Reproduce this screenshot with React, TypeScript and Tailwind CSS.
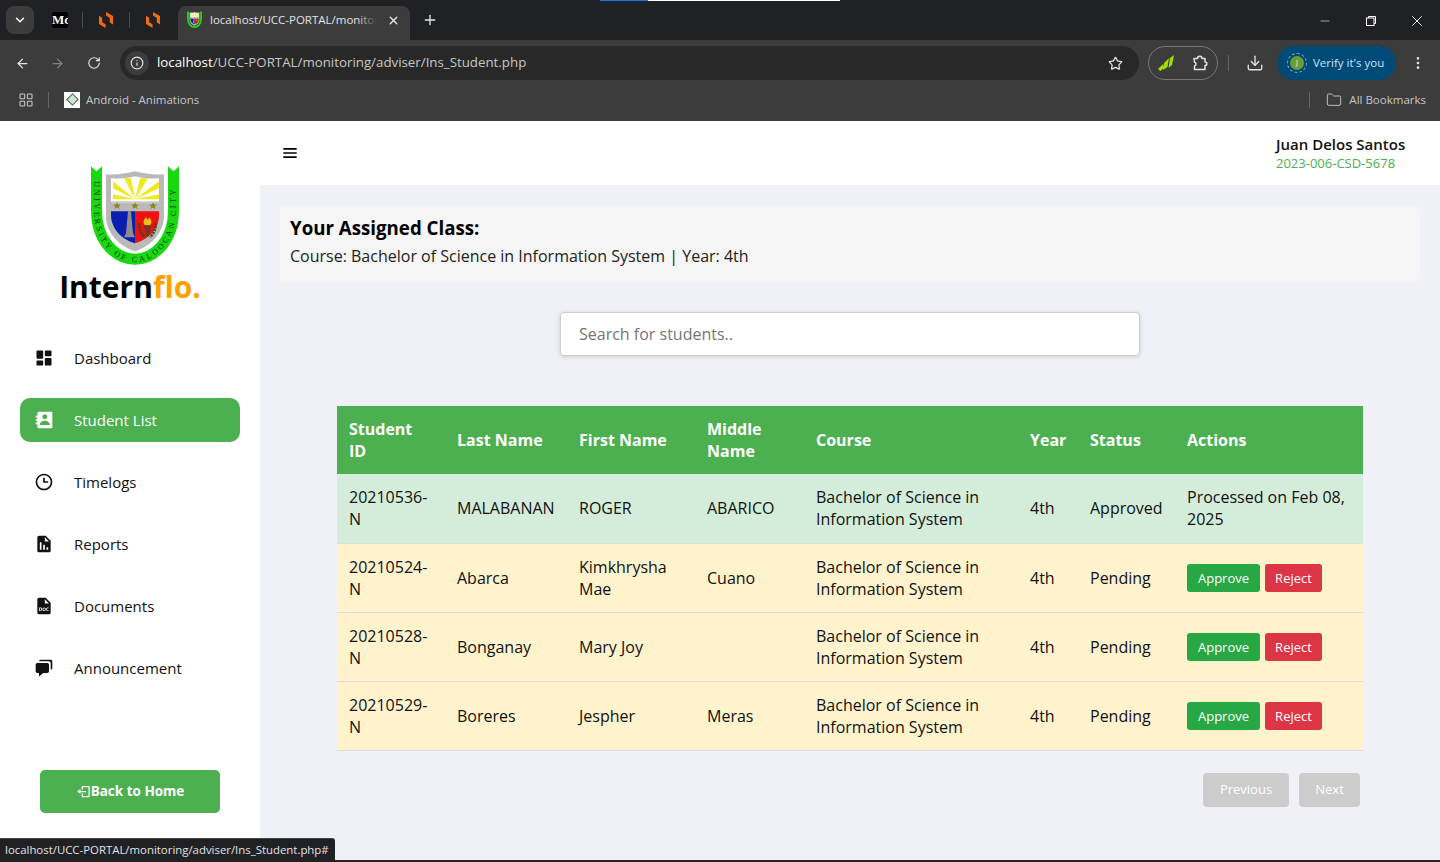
import { ChevronDown, X, Plus, ArrowLeft, ArrowRight, RotateCw, Info, Star, Download, EllipsisVertical, LayoutGrid, Folder, Minus } from "lucide-react"
import { BiSolidDashboard, BiSolidContact, BiTime, BiSolidReport, BiSolidFileDoc, BiSolidChat, BiMenu, BiLogOut } from "react-icons/bi"

const navItems = [
  { label: "Dashboard", icon: BiSolidDashboard },
  { label: "Student List", icon: BiSolidContact, active: true },
  { label: "Timelogs", icon: BiTime },
  { label: "Reports", icon: BiSolidReport },
  { label: "Documents", icon: BiSolidFileDoc },
  { label: "Announcement", icon: BiSolidChat },
]

const students = [
  { id: "20210536-N", last: "MALABANAN", first: "ROGER", middle: "ABARICO", status: "Approved" },
  { id: "20210524-N", last: "Abarca", first: "Kimkhrysha Mae", middle: "Cuano", status: "Pending" },
  { id: "20210528-N", last: "Bonganay", first: "Mary Joy", middle: "", status: "Pending" },
  { id: "20210529-N", last: "Boreres", first: "Jespher", middle: "Meras", status: "Pending" },
]

function Crest({ size, id, label }: { size: number; id: string; label?: boolean }) {
  return (
    <svg width={size} height={size * 1.14} viewBox="0 0 88 100" fontFamily="Liberation Serif, serif">
      <path d="M5.500 8V45C5.500 75 24 94 44 94C64 94 82.500 75 82.500 45V8" fill="none" stroke="#19d80f" strokeWidth="11" />
      <path d="M0 1l5.500 5L11 1v12H0zM77 1l5.500 5L88 1v12H77z" fill="#19d80f" />
      <path d="M15 9c10 1 20-1 29-3 9 2 19 4 29 3v42c0 16-13 30-29 35C28 81 15 67 15 51z" fill="#b9b9b9" />
      <path d="M20 13c8 1 16 0 24-2 8 2 16 3 24 2v24H20z" fill="#fff" />
      <path d="M44 34L33 13h7zM44 34l5-21h8zM44 34L22 16v7zM44 34l24-18v7zM44 34H22v-5zM44 34h24v-5z" fill="#eeea1e" />
      <path d="M20 36h48v2H20z" fill="#c9c9c9" />
      <path d="M26 37l1.200 2.400 2.600.2-2 1.700.7 2.600-2.500-1.500-2.500 1.500.7-2.600-2-1.700 2.600-.2zM44 37l1.200 2.400 2.600.2-2 1.700.7 2.600-2.500-1.500-2.500 1.500.7-2.600-2-1.700 2.600-.2zM62 37l1.200 2.400 2.600.2-2 1.700.7 2.600-2.500-1.500-2.500 1.500.7-2.600-2-1.700 2.600-.2z" fill="#8a8a20" />
      <path d="M20 46h24v32c-12-3-24-14-24-28z" fill="#0a1fb0" />
      <path d="M44 46h24v4c0 14-12 25-24 28z" fill="#ee1111" />
      <path d="M33 72l2-4 2-22h3l2 22 2 4z" fill="#8d8d8d" />
      <path d="M55 52c-3 3-3 6-1 8h5c2-2 2-5-1-8l-1 3z" fill="#f2c21b" />
      <path d="M53 60h7l-2 11h-3z" fill="#6b3a22" />
      <path d="M48 58c0 7 3 11 6 14M65 58c0 7-3 11-6 14" fill="none" stroke="#3a4a20" strokeWidth="2.500" strokeDasharray="2 1" />
      <path id={id} d="M3 14V45C3 77 24 97 44 97C64 97 85 77 85 45V14" fill="none" />
      {label && (
        <text fontSize="8" fill="#0e300e">
          <textPath href={`#${id}`} startOffset="2" textLength="196">UNIVERSITY  OF  CALOOCAN  CITY</textPath>
        </text>
      )}
    </svg>
  )
}

function ChromeTabs() {
  return (
    <div className="flex h-10 items-start bg-[#202124] pl-[6px] pt-[6px]">
      <div className="flex h-[28px] w-[28px] items-center justify-center rounded-lg bg-[#3c3c3c] text-white">
        <ChevronDown size={14} strokeWidth={2.500} />
      </div>
      <div className="ml-[18px] mt-[6px] flex h-4 w-4 items-center overflow-hidden rounded-[2px] bg-black font-['Liberation_Serif',serif] text-[13px] font-bold text-white">Mc</div>
      <div className="ml-[14px] mt-[6px] h-4 w-px bg-[#4a4a4a]" />
      <Bolt className="ml-[15px] mt-[6px]" />
      <div className="ml-[15px] mt-[6px] h-4 w-px bg-[#4a4a4a]" />
      <Bolt className="ml-[15px] mt-[6px]" />
      <div className="ml-[17px] flex h-[34px] w-[232px] items-center rounded-t-lg bg-[#3c3c3c] pb-[6px] pl-[9px] pr-2">
        <Crest size={15} id="tabCrest" />
        <div className="relative ml-[8px] w-[167px] overflow-hidden whitespace-nowrap text-[11.500px] text-[#e3e3e3]">
          localhost/UCC-PORTAL/monitoring
          <div className="absolute inset-y-0 right-0 w-5 bg-gradient-to-r from-transparent to-[#3c3c3c]" />
        </div>
        <X size={13} strokeWidth={2.500} className="ml-[10px] text-[#e3e3e3]" />
      </div>
      <Plus size={16} strokeWidth={2} className="ml-[12px] mt-[6px] text-[#e3e3e3]" />
      <div className="ml-auto flex items-center text-white">
        <Minus size={14} strokeWidth={1} className="mr-[33px] mt-[6px]" />
        <svg width="12" height="12" viewBox="0 0 12 12" fill="none" stroke="currentColor" className="mr-[31px] mt-[6px]">
          <rect x="1.500" y="3" width="7.500" height="7.500" />
          <path d="M3.500 3V1.500h7v7H9" />
        </svg>
        <X size={18} strokeWidth={1.200} className="mr-[14px] mt-[6px]" />
      </div>
    </div>
  )
}

function Bolt({ className }: { className: string }) {
  return (
    <svg width="16" height="16" viewBox="0 0 16 16" className={className} fill="#f26b12">
      <path d="M8 0l7 4v8.500l-3.200-2V6L8 3.600zM7.500 16L1 12V3.700l3.200 2V10.300l3.300 2z" />
    </svg>
  )
}

function ChromeToolbar() {
  return (
    <div className="flex h-[41px] items-center bg-[#3c3c3c] pl-[15px] pt-[5px] text-[#e3e3e3]">
      <ArrowLeft size={15} strokeWidth={2} />
      <ArrowRight size={15} strokeWidth={2} className="ml-[20px] text-[#808080]" />
      <RotateCw size={14} strokeWidth={2} className="ml-[22px]" />
      <div className="ml-[19px] flex h-[34px] w-[1019px] items-center rounded-full bg-[#282828] pl-[5px] pr-[16px]">
        <div className="flex h-[24px] w-[24px] items-center justify-center rounded-full bg-[#3c3c3c]">
          <Info size={14} />
        </div>
        <span className="ml-[8px] text-[13.300px] text-[#c7c7c7]"><span className="text-white">localhost</span>/UCC-PORTAL/monitoring/adviser/Ins_Student.php</span>
        <Star size={15} className="ml-auto" />
      </div>
      <div className="ml-[9px] flex h-[34px] w-[70px] items-center justify-between rounded-full border border-[#777] px-[8px]">
        <svg width="18" height="18" viewBox="0 0 18 18" fill="#9be000">
          <path d="M1 15l5-5 .5 4-3 3zM6 16l1-7 5-5-1.500 9zM11.500 14l1.500-10 4-3-2 10z" />
        </svg>
        <svg width="18" height="18" viewBox="0 0 18 18" fill="none" stroke="currentColor" strokeWidth="1.500" strokeLinejoin="round">
          <path d="M3 4.500h3.500c0-3 4.500-3 4.500 0H14V8c2.500 0 2.500 3.500 0 3.500V15.500H3.500V12c2-.5 2-3.500 0-4z" />
        </svg>
      </div>
      <div className="ml-[10px] h-4 w-px bg-[#666]" />
      <Download size={18} strokeWidth={1.800} className="ml-[17px]" />
      <div className="ml-[13px] flex h-[34px] w-[119px] items-center rounded-full bg-[#004a77] pl-[10px] text-[11.500px] text-[#c2e7ff]">
        <div className="flex h-[20px] w-[20px] items-center justify-center rounded-full border border-dashed border-[#8ab4c8]">
          <div className="flex h-[14px] w-[14px] items-center justify-center rounded-full bg-[#6b9c32] text-[7px] text-white">J</div>
        </div>
        <span className="ml-[6px] whitespace-nowrap">Verify it's you</span>
      </div>
      <EllipsisVertical size={16} className="ml-[14px]" />
    </div>
  )
}

function ChromeBookmarks() {
  return (
    <div className="flex h-10 items-center bg-[#3c3c3c] pb-[3px] pl-[18px] pr-[14px] text-[11.500px] text-[#c7c7c7]">
      <LayoutGrid size={16} strokeWidth={1.600} />
      <div className="ml-[14px] h-4 w-px bg-[#666]" />
      <div className="ml-[15px] flex h-4 w-4 items-center justify-center bg-white">
        <div className="h-[9px] w-[9px] rotate-45 border border-[#446644] bg-[#cfe5cf]" />
      </div>
      <span className="ml-[6px]">Android - Animations</span>
      <div className="ml-auto h-4 w-px bg-[#666]" />
      <Folder size={16} strokeWidth={1.400} className="ml-[16px]" />
      <span className="ml-[7px]">All Bookmarks</span>
    </div>
  )
}

function Sidebar() {
  return (
    <aside className="flex w-[260px] shrink-0 flex-col bg-white">
      <div className="flex flex-col items-center pt-[44px]">
        <div className="ml-[10px]">
          <Crest size={88} id="mainCrest" label />
        </div>
        <div className="mt-[5px] text-[30px] font-bold leading-[34px] text-black">
          Intern<span className="text-[#ff9f00]">flo.</span>
        </div>
      </div>
      <nav className="mt-[32px] flex flex-col gap-[18px] px-5">
        {navItems.map((item) => {
          const Icon = item.icon
          return (
            <a key={item.label} className={`flex h-11 items-center rounded-[10px] pl-[14px] text-[15px] ${item.active ? "bg-[#4caf50] text-white" : "text-[#111]"}`}>
              <Icon size={20} />
              <span className="ml-5">{item.label}</span>
            </a>
          )
        })}
      </nav>
      <div className="mt-auto px-10 pb-[49px]">
        <button className="flex h-[43px] w-full items-center justify-center rounded-[5px] bg-[#4caf50] text-[13.500px] font-bold text-white">
          <BiLogOut size={15} />
          Back to Home
        </button>
      </div>
    </aside>
  )
}

function StudentTable() {
  const th = "px-3 py-3 text-left align-middle text-base font-bold leading-[22px] text-white"
  const td = "px-3 py-3 align-middle leading-[22px]"
  return (
    <table className="ml-[77px] mt-[50px] w-[1026px] table-fixed border-collapse text-base text-[#111]">
      <colgroup>
        <col className="w-[108px]" />
        <col className="w-[122px]" />
        <col className="w-[128px]" />
        <col className="w-[109px]" />
        <col className="w-[214px]" />
        <col className="w-[60px]" />
        <col className="w-[97px]" />
        <col className="w-[188px]" />
      </colgroup>
      <thead className="bg-[#4caf50]">
        <tr>
          <th className={th}>Student ID</th>
          <th className={th}>Last Name</th>
          <th className={th}>First Name</th>
          <th className={th}>Middle Name</th>
          <th className={th}>Course</th>
          <th className={th}>Year</th>
          <th className={th}>Status</th>
          <th className={th}>Actions</th>
        </tr>
      </thead>
      <tbody>
        {students.map((s) => (
          <tr key={s.id} className={`border-b border-[#ddd] ${s.status === "Approved" ? "h-[69px] bg-[#d4edda]" : "bg-[#fff3cd]"}`}>
            <td className={td}>{s.id}</td>
            <td className={td}>{s.last}</td>
            <td className={td}>{s.first}</td>
            <td className={td}>{s.middle}</td>
            <td className={td}>Bachelor of Science in Information System</td>
            <td className={td}>4th</td>
            <td className={td}>{s.status}</td>
            <td className={td}>
              {s.status === "Approved" ? (
                "Processed on Feb 08, 2025"
              ) : (
                <div className="flex gap-[5px]">
                  <button className="h-[28px] w-[73px] rounded-[3px] bg-[#28a745] text-[13px] text-white">Approve</button>
                  <button className="h-[28px] w-[57px] rounded-[3px] bg-[#dc3545] text-[13px] text-white">Reject</button>
                </div>
              )}
            </td>
          </tr>
        ))}
      </tbody>
    </table>
  )
}

export default function App() {
  return (
    <div className="relative flex h-[862px] flex-col overflow-hidden bg-[#f0f0f7] font-['Open_Sans',sans-serif]">
      <div className="absolute left-[600px] top-0 h-px w-[240px] bg-white" />
      <div className="absolute left-[600px] top-0 h-px w-[48px] bg-[#1a73e8]" />
      <ChromeTabs />
      <ChromeToolbar />
      <ChromeBookmarks />
      <div className="flex min-h-0 flex-1">
        <Sidebar />
        <main className="min-w-0 flex-1">
          <header className="flex h-16 items-center justify-between bg-white pl-[20px] pr-[34px]">
            <BiMenu size={20} className="text-black" />
            <div className="w-[130px]">
              <div className="text-[15px] font-semibold leading-[18px] text-[#111]">Juan Delos Santos</div>
              <div className="mt-px text-[13px] leading-[18px] text-[#4caf50]">2023-006-CSD-5678</div>
            </div>
          </header>
          <section className="px-5 pt-[21px]">
            <div className="h-[76px] rounded-[4px] bg-[#f5f5f5] px-[10px] pt-[10px]">
              <h2 className="text-[18.700px] font-bold leading-6 text-black">Your Assigned Class:</h2>
              <p className="mt-[4px] text-base leading-6 text-[#222]">Course: Bachelor of Science in Information System | Year: 4th</p>
            </div>
            <input
              placeholder="Search for students.."
              className="mx-auto mt-[30px] block h-11 w-[580px] rounded-[4px] border border-[#ccc] bg-white px-[18px] text-base shadow-[0_1px_4px_rgba(0,0,0,0.15)] placeholder:text-[#757575]"
            />
          </section>
          <StudentTable />
          <div className="mt-[22px] flex justify-end gap-[10px] pr-[80px]">
            <button className="h-[34px] w-[86px] rounded-[4px] bg-[#cccccc] text-[13px] text-white">Previous</button>
            <button className="h-[34px] w-[61px] rounded-[4px] bg-[#cccccc] text-[13px] text-white">Next</button>
          </div>
        </main>
      </div>
      <div className="absolute inset-x-0 bottom-0 h-[2px] bg-[#2a2420]" />
      <div className="absolute bottom-0 left-0 h-[24px] w-[335px] whitespace-nowrap rounded-tr-[3px] border-t border-[#444] bg-[#202124] pl-[5px] text-[11.400px] leading-[22px] text-[#e3e3e3]">
        localhost/UCC-PORTAL/monitoring/adviser/Ins_Student.php#
      </div>
    </div>
  )
}
